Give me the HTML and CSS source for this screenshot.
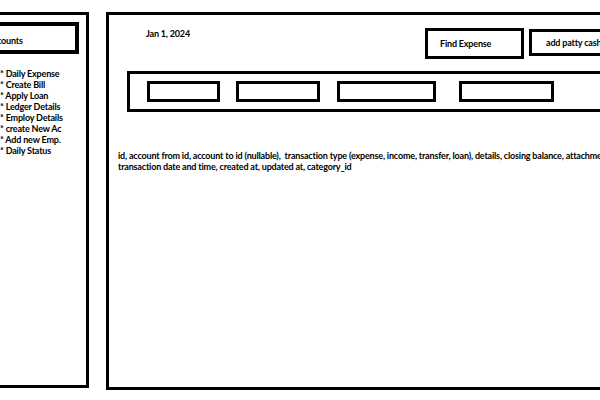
FILE: index.html
```html
<!DOCTYPE html>
<html lang="en">
<head>
    <meta charset="UTF-8">
    <meta name="viewport" content="width=device-width, initial-scale=1.0">
    <title>Accounts - Expenses</title>
    <link rel="stylesheet" href="styles.css">
</head>
<body>
    <div class="layout">
        <!-- left menu -->
        <aside class="sidebar">
            <div class="sidebar-title">Accounts</div>
            <ul class="menu">
                <li>* Daily Expense</li>
                <li>* Create Bill</li>
                <li>* Apply Loan</li>
                <li>* Ledger Details</li>
                <li>* Employ Details</li>
                <li>* create New Ac</li>
                <li>* Add new Emp.</li>
                <li>* Daily Status</li>
            </ul>
        </aside>

        <main class="main">
            <div class="topbar">
                <div class="date">Jan 1, 2024</div>
                <button class="btn btn-find">Find Expense</button>
                <button class="btn btn-cash">add patty cash</button>
            </div>

            <div class="filter-bar">
                <div class="slot slot-1"></div>
                <div class="slot slot-2"></div>
                <div class="slot slot-3"></div>
                <div class="slot slot-4"></div>
            </div>

            <p class="fields">
                id, account from id, account to id (nullable),&nbsp; transaction type (expense, income, transfer, loan), details, closing balance, attachments,<br>
                transaction date and time, created at, updated at, category_id
            </p>
        </main>
    </div>
</body>
</html>
```

FILE: styles.css
```css
html, body {
    margin: 0;
    padding: 0;
    background: #fff;
    overflow: hidden;
}

body {
    font-family: 'Lato', 'Liberation Sans', sans-serif;
    font-weight: 700;
    font-size: 9px;
    letter-spacing: -0.18px;
    color: #000;
    width: 600px;
    height: 400px;
}

.layout {
    display: flex;
    align-items: flex-start;
    gap: 17px;
    margin-left: -40px;
    padding-top: 12px;
    width: 760px;
}

/* left menu */
.sidebar {
    flex: 0 0 auto;
    width: 123px;
    height: 363px;
    border: 3px solid #000;
    padding-top: 7px;
}

.sidebar-title {
    margin: 0 7px 0 7px;
    height: 21px;
    border: 4px solid #000;
    padding: 3px 0 0 13px;
    line-height: 24px;
}

.menu {
    list-style: none;
    margin: 14px 0 0 0;
    padding: 0 0 0 37px;
    line-height: 11px;
}

/* main area */
.main {
    flex: 0 0 auto;
    width: 600px;
    height: 372px;
    border: 3px solid #000;
}

.topbar {
    display: flex;
    align-items: flex-start;
    padding: 13px 0 0 37px;
}

.date {
    flex: 0 0 279px;
    line-height: 12px;
}

.btn {
    font-family: inherit;
    font-weight: 700;
    font-size: 9px;
    letter-spacing: -0.18px;
    background: #fff;
    color: #000;
    border: 3px solid #000;
    text-align: left;
    padding: 0;
    margin: 0;
}

.btn-find {
    width: 99px;
    height: 31px;
    padding-left: 12px;
}

.btn-cash {
    width: 100px;
    height: 27px;
    margin-left: 5px;
    margin-top: 1px;
    padding-left: 14px;
}

.filter-bar {
    display: flex;
    margin: 12px 0 0 18px;
    width: 520px;
    height: 28px;
    border: 3px solid #000;
    padding: 7px 0 0 17px;
    box-sizing: content-box;
}

.slot {
    height: 15px;
    border: 3px solid #000;
}

.slot-1 { width: 67px; }
.slot-2 { width: 78px; margin-left: 16px; }
.slot-3 { width: 93px; margin-left: 17px; }
.slot-4 { width: 89px; margin-left: 23px; }

.fields {
    margin: 38px 0 0 9px;
    line-height: 11px;
    white-space: nowrap;
}
```
